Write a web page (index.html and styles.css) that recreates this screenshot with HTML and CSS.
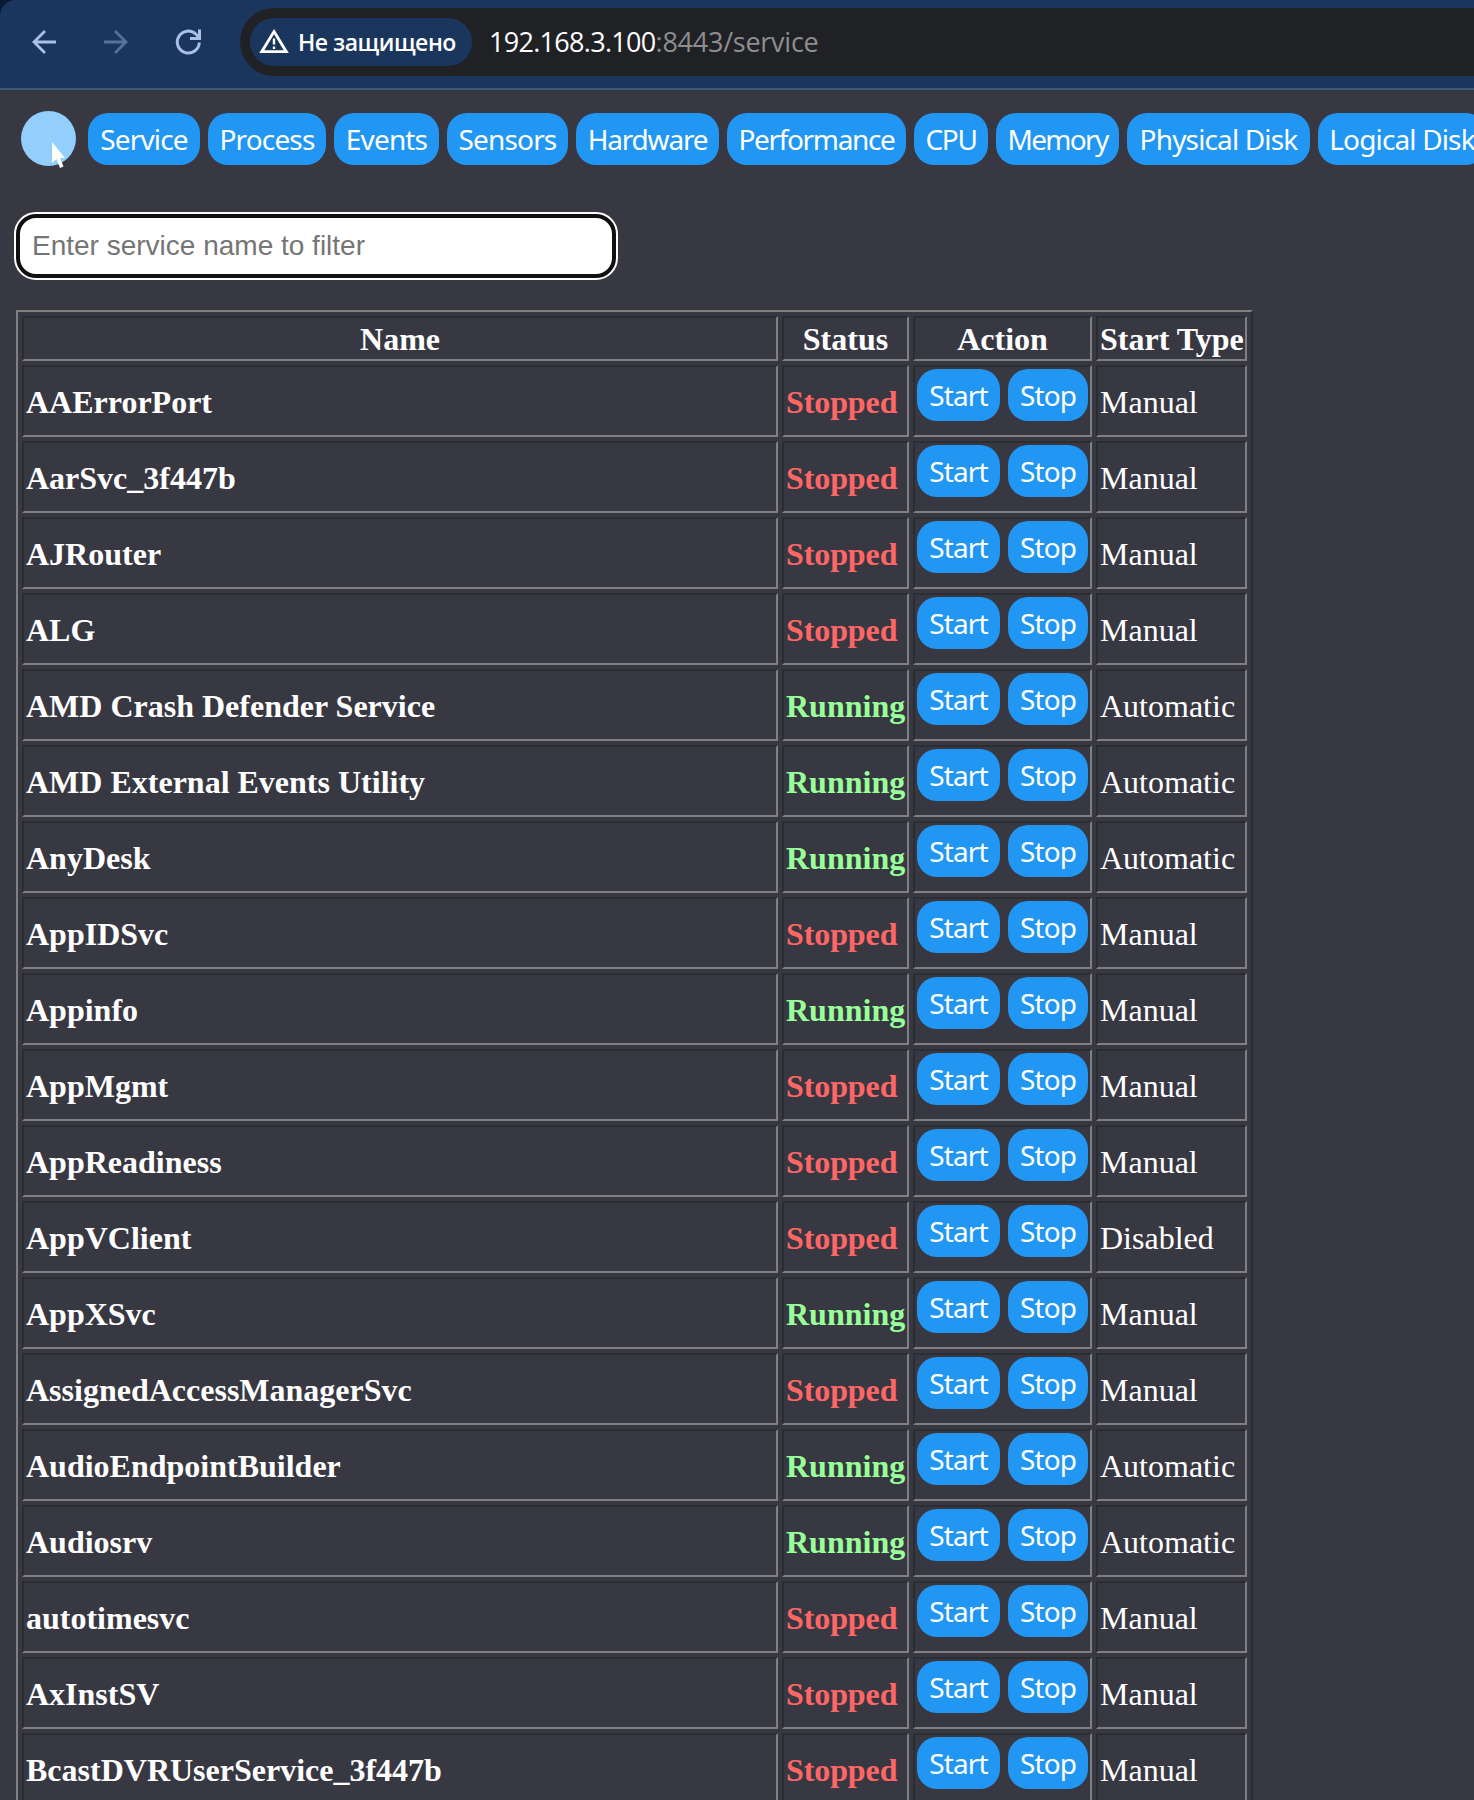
FILE: index.html
```html
<!DOCTYPE html>
<html lang="en">
<head>
<meta charset="utf-8">
<title>Service</title>
<link rel="stylesheet" href="styles.css">
</head>
<body>
<header class="browser-bar">
  <svg class="nav-icon" viewBox="0 0 24 24"><path d="M24 12H2M13 1 2 12l11 11"/></svg>
  <svg class="nav-icon nav-icon-off" viewBox="0 0 24 24"><path d="M0 12h22M11 1l11 11-11 11"/></svg>
  <svg class="nav-icon nav-icon-reload" viewBox="0 0 26 26"><path d="M24.300 13.500A11 11 0 1 1 21 5.200L24 8.200M24.500 0.500V9.500H15"/></svg>
  <div class="omnibox">
    <div class="chip">
      <svg class="warn" viewBox="0 0 30 26"><path class="warn-tri" d="M15 3.600 27.300 23.700H2.700Z"/><path class="warn-mark" d="M15 10.500v6M15 18.400v2.600"/></svg>
      <span class="chip-text">Не защищено</span>
    </div>
    <div class="url"><span class="host">192.168.3.100</span><span class="path">:8443/service</span></div>
  </div>
</header>
<main class="page">
  <nav class="menu">
    <div class="pointer">
      <svg class="cursor" viewBox="0 0 14 28"><path d="M1 1v21l4.500-4 3.500 9 3.500-1.500-3.500-8.500H14Z"/></svg>
    </div>
    <button class="btn w-service">Service</button>
    <button class="btn w-process">Process</button>
    <button class="btn w-events">Events</button>
    <button class="btn w-sensors">Sensors</button>
    <button class="btn w-hardware">Hardware</button>
    <button class="btn w-performance">Performance</button>
    <button class="btn w-cpu">CPU</button>
    <button class="btn w-memory">Memory</button>
    <button class="btn w-physical">Physical Disk</button>
    <button class="btn w-logical">Logical Disk</button>
  </nav>
  <input class="filter" type="text" placeholder="Enter service name to filter">
  <table class="services">
    <colgroup><col class="c-name"><col class="c-status"><col class="c-action"><col class="c-type"></colgroup>
    <thead><tr><th>Name</th><th>Status</th><th>Action</th><th>Start Type</th></tr></thead>
    <tbody>
      <tr><td class="name">AAErrorPort</td><td class="stopped">Stopped</td><td><div class="actions"><button class="btn w-start">Start</button><button class="btn w-stop">Stop</button></div></td><td class="type">Manual</td></tr>
      <tr><td class="name">AarSvc_3f447b</td><td class="stopped">Stopped</td><td><div class="actions"><button class="btn w-start">Start</button><button class="btn w-stop">Stop</button></div></td><td class="type">Manual</td></tr>
      <tr><td class="name">AJRouter</td><td class="stopped">Stopped</td><td><div class="actions"><button class="btn w-start">Start</button><button class="btn w-stop">Stop</button></div></td><td class="type">Manual</td></tr>
      <tr><td class="name">ALG</td><td class="stopped">Stopped</td><td><div class="actions"><button class="btn w-start">Start</button><button class="btn w-stop">Stop</button></div></td><td class="type">Manual</td></tr>
      <tr><td class="name">AMD Crash Defender Service</td><td class="running">Running</td><td><div class="actions"><button class="btn w-start">Start</button><button class="btn w-stop">Stop</button></div></td><td class="type">Automatic</td></tr>
      <tr><td class="name">AMD External Events Utility</td><td class="running">Running</td><td><div class="actions"><button class="btn w-start">Start</button><button class="btn w-stop">Stop</button></div></td><td class="type">Automatic</td></tr>
      <tr><td class="name">AnyDesk</td><td class="running">Running</td><td><div class="actions"><button class="btn w-start">Start</button><button class="btn w-stop">Stop</button></div></td><td class="type">Automatic</td></tr>
      <tr><td class="name">AppIDSvc</td><td class="stopped">Stopped</td><td><div class="actions"><button class="btn w-start">Start</button><button class="btn w-stop">Stop</button></div></td><td class="type">Manual</td></tr>
      <tr><td class="name">Appinfo</td><td class="running">Running</td><td><div class="actions"><button class="btn w-start">Start</button><button class="btn w-stop">Stop</button></div></td><td class="type">Manual</td></tr>
      <tr><td class="name">AppMgmt</td><td class="stopped">Stopped</td><td><div class="actions"><button class="btn w-start">Start</button><button class="btn w-stop">Stop</button></div></td><td class="type">Manual</td></tr>
      <tr><td class="name">AppReadiness</td><td class="stopped">Stopped</td><td><div class="actions"><button class="btn w-start">Start</button><button class="btn w-stop">Stop</button></div></td><td class="type">Manual</td></tr>
      <tr><td class="name">AppVClient</td><td class="stopped">Stopped</td><td><div class="actions"><button class="btn w-start">Start</button><button class="btn w-stop">Stop</button></div></td><td class="type">Disabled</td></tr>
      <tr><td class="name">AppXSvc</td><td class="running">Running</td><td><div class="actions"><button class="btn w-start">Start</button><button class="btn w-stop">Stop</button></div></td><td class="type">Manual</td></tr>
      <tr><td class="name">AssignedAccessManagerSvc</td><td class="stopped">Stopped</td><td><div class="actions"><button class="btn w-start">Start</button><button class="btn w-stop">Stop</button></div></td><td class="type">Manual</td></tr>
      <tr><td class="name">AudioEndpointBuilder</td><td class="running">Running</td><td><div class="actions"><button class="btn w-start">Start</button><button class="btn w-stop">Stop</button></div></td><td class="type">Automatic</td></tr>
      <tr><td class="name">Audiosrv</td><td class="running">Running</td><td><div class="actions"><button class="btn w-start">Start</button><button class="btn w-stop">Stop</button></div></td><td class="type">Automatic</td></tr>
      <tr><td class="name">autotimesvc</td><td class="stopped">Stopped</td><td><div class="actions"><button class="btn w-start">Start</button><button class="btn w-stop">Stop</button></div></td><td class="type">Manual</td></tr>
      <tr><td class="name">AxInstSV</td><td class="stopped">Stopped</td><td><div class="actions"><button class="btn w-start">Start</button><button class="btn w-stop">Stop</button></div></td><td class="type">Manual</td></tr>
      <tr><td class="name">BcastDVRUserService_3f447b</td><td class="stopped">Stopped</td><td><div class="actions"><button class="btn w-start">Start</button><button class="btn w-stop">Stop</button></div></td><td class="type">Manual</td></tr>
    </tbody>
  </table>
</main>
</body>
</html>
```
FILE: styles.css
```css
* { box-sizing: border-box; }
html { overflow: hidden; background: #383842; }
body {
  margin: 0;
  width: 100vw;
  height: 100vh;
  overflow: hidden;
  background: #383842;
  color: #fff;
  font: 32px/37px "Liberation Serif", serif;
}

/* Browser toolbar */
.browser-bar {
  display: flex;
  align-items: flex-start;
  height: 90px;
  padding: 8px 0 0 32px;
  border-bottom: 2px solid #3f5877;
  background: radial-gradient(circle at 100% 100%, #1b365d 15.500px, #091a35 16.500px) 0 0 / 16px 16px no-repeat, #1b365d;
}
.nav-icon {
  flex: none;
  width: 24px;
  height: 24px;
  margin: 22px 48px 0 0;
  fill: none;
  stroke: #a9c1e6;
  stroke-width: 2.800;
}
.nav-icon-off { stroke: #56719a; }
.nav-icon-reload { width: 26px; height: 26px; margin: 21px 39px 0 -1px; stroke-width: 3; }
.omnibox {
  display: flex;
  flex: 1;
  align-items: center;
  height: 68px;
  padding-left: 10px;
  border-radius: 34px 0 0 34px;
  background: #202124;
}
.chip {
  display: flex;
  align-items: center;
  width: 222px;
  height: 48px;
  padding-left: 9px;
  border-radius: 24px;
  background: #1b365d;
}
.warn { width: 30px; height: 26px; margin: -2px 9px 0 0; fill: none; stroke: #fff; }
.warn-tri { stroke-width: 2.800; }
.warn-mark { stroke-width: 2.400; }
.chip-text {
  font: 600 23px/30px "Open Sans", sans-serif;
  letter-spacing: -0.450px;
  white-space: nowrap;
}
.url {
  margin-left: 17px;
  font: 27px/36px "Open Sans", sans-serif;
  letter-spacing: -0.700px;
  white-space: nowrap;
}
.path { color: #8d8e90; letter-spacing: -0.250px; }

/* Page content */
.page { padding: 23px 0 0 16px; }
.menu { display: flex; gap: 8px; height: 52px; }
.pointer {
  position: relative;
  flex: none;
  width: 55px;
  height: 55px;
  margin: -2px 4px 0 5px;
  border-radius: 50%;
  background: #93cffd;
}
.cursor { position: absolute; left: 30px; top: 30px; width: 14px; height: 28px; fill: #fff; }
.btn {
  flex: none;
  height: 52px;
  padding: 0;
  border: 0;
  border-radius: 20px;
  background: #2196f3;
  color: #fff;
  font: 28px/34px "Noto Sans", sans-serif;
  letter-spacing: -0.850px;
  text-align: center;
  white-space: nowrap;
}
.w-service { width: 112px; }
.w-process { width: 118px; }
.w-events { width: 105px; }
.w-sensors { width: 121px; }
.w-hardware { width: 143px; letter-spacing: -1.200px; }
.w-performance { width: 179px; letter-spacing: -1.350px; }
.w-cpu { width: 74px; letter-spacing: -1.300px; }
.w-memory { width: 123px; letter-spacing: -1.700px; }
.w-physical { width: 183px; }
.w-logical { width: 168px; }
.w-start { width: 83px; }
.w-stop { width: 80px; }

.filter {
  display: block;
  width: 600px;
  height: 64px;
  margin-top: 49px;
  padding: 0 12px;
  border: 4px solid #101010;
  border-radius: 20px;
  outline: 2px solid #fff;
  background: #fff;
  font: 28px/32px "Liberation Sans", sans-serif;
}
.filter::placeholder { color: #757575; opacity: 1; }

/* Services table */
.services {
  table-layout: fixed;
  width: 1237px;
  margin-top: 32px;
  border: 2px solid;
  border-color: #808084 #2c2d31 #2c2d31 #808084;
  border-spacing: 4px;
}
.c-name { width: 756px; }
.c-status { width: 127px; }
.c-action { width: 179px; }
.c-type { width: 151px; }
.services th, .services td {
  padding: 2px;
  border: 2px solid;
  border-color: #2c2d31 #808084 #808084 #2c2d31;
  white-space: nowrap;
}
.services th { height: 45px; padding: 3px 2px 1px; }
.services td { height: 72px; }
.services .name, .services .stopped, .services .running, .services .type { padding-top: 4px; }
.name, .stopped, .running { font-weight: bold; }
.stopped { color: #ff6666; letter-spacing: -0.100px; }
.running { color: #99ff99; }
.actions { display: flex; gap: 8px; height: 64px; }
```
